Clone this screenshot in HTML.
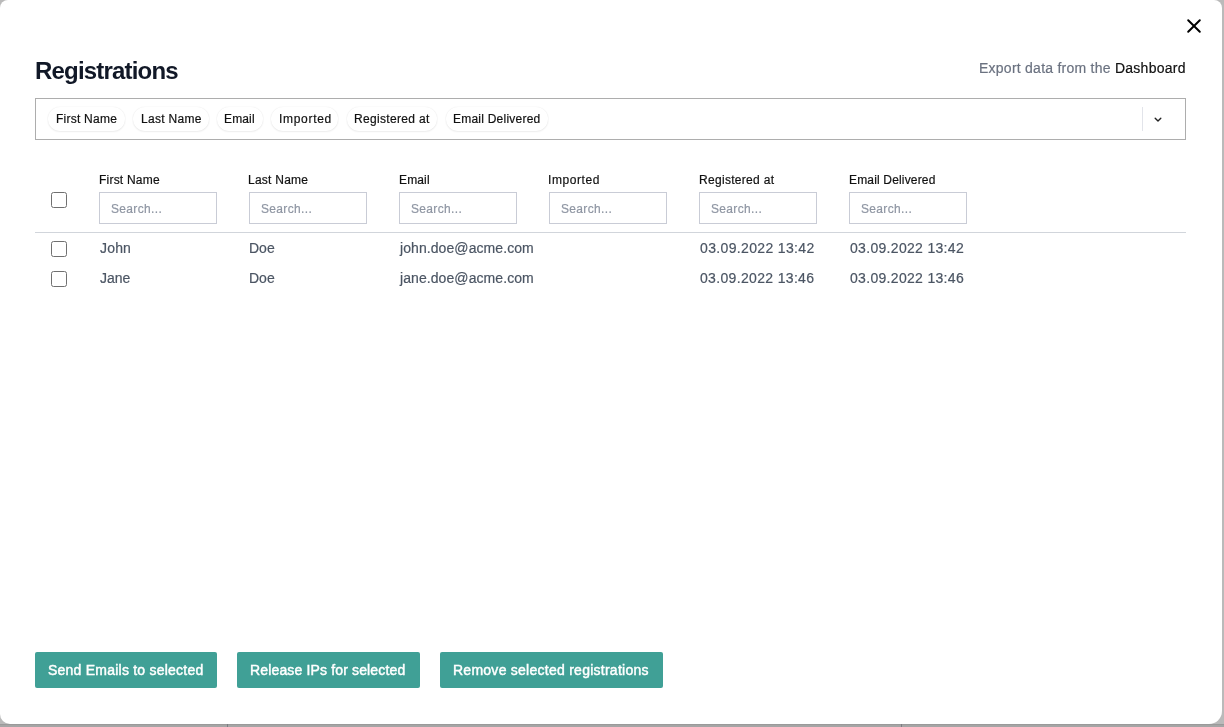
<!DOCTYPE html>
<html>
<head>
<meta charset="utf-8">
<style>
* { box-sizing: border-box; }
html, body { margin: 0; padding: 0; }
body { width: 1224px; height: 727px; overflow: hidden; background: #bababa; position: relative; font-family: "Liberation Sans", sans-serif; }
.bgstrip { position: absolute; left: 0; top: 724px; width: 1224px; height: 3px; background: #a5a5a5; border-top: 1px solid #9a9a9a; }
.vl { position: absolute; top: 724px; width: 1px; height: 3px; background: #7c7c82; }
.modal { position: absolute; left: 0; top: 0; width: 1222px; height: 724px; background: #fff; border-radius: 8px 8px 13px 10px; }
.t { position: absolute; white-space: nowrap; will-change: transform; -webkit-text-stroke: 0.2px currentColor; }
.title { font-size: 24px; font-weight: bold; color: #111827; line-height: 30px; -webkit-text-stroke: 0; }
.export { font-size: 14px; color: #6b7280; line-height: 18px; }
.export span { color: #111; -webkit-text-stroke: 0.2px #111; }
.close { position: absolute; left: 1186px; top: 18px; width: 16px; height: 16px; }
.filter { position: absolute; left: 35px; top: 98px; width: 1151px; height: 42px; border: 1px solid #adadad; }
.pill { position: absolute; top: 106.5px; height: 24.5px; border-radius: 13px; box-shadow: 0 1px 2px rgba(0,0,0,0.06), 0 0 1.5px rgba(0,0,0,0.09); background: #fff; }
.ptxt { font-size: 12px; color: #111; line-height: 15px; }
.sep { position: absolute; left: 1142px; top: 107px; width: 1px; height: 24px; background: #e2e4ea; }
.chev { position: absolute; left: 1153px; top: 115px; width: 10px; height: 10px; }
.hdr { font-size: 12px; color: #111; line-height: 15px; }
.inp { position: absolute; top: 192px; width: 118px; height: 32px; border: 1px solid #c9ccd6; }
.ph { font-size: 12px; color: #8f96a3; line-height: 15px; }
.cb { position: absolute; left: 51px; width: 16px; height: 16px; border: 1.5px solid #707070; border-radius: 2.5px; }
.hline { position: absolute; left: 35px; top: 232px; width: 1151px; height: 1px; background: #d1d5db; }
.cell { font-size: 14px; color: #4b5563; line-height: 18px; }
.btn { position: absolute; top: 652px; height: 36px; background: #40a096; border-radius: 2px; }
.btxt { font-size: 14px; color: #fff; line-height: 18px; -webkit-text-stroke: 0.45px #fff; }
</style>
</head>
<body>
<div class="bgstrip"></div><div class="vl" style="left:227px"></div><div class="vl" style="left:901px"></div>
<div class="modal">
<div id="title" class="t title" style="left:34.82px;top:56.00px;letter-spacing:-0.810px">Registrations</div>
<div id="export" class="t export" style="left:979.20px;top:59.00px;letter-spacing:0.248px">Export data from the <span>Dashboard</span></div>
<svg class="close" viewBox="0 0 16 16"><path d="M2.2 2.2 L13.8 13.8 M13.8 2.2 L2.2 13.8" stroke="#000" stroke-width="2" stroke-linecap="round"/></svg>
<div class="filter"></div>
<div class="pill" style="left:47.5px;width:77.5px"></div>
<div class="pill" style="left:133px;width:75.7px"></div>
<div class="pill" style="left:217px;width:45.5px"></div>
<div class="pill" style="left:271.3px;width:67.2px"></div>
<div class="pill" style="left:347.2px;width:90.2px"></div>
<div class="pill" style="left:445.8px;width:102.5px"></div>
<div id="p1" class="t ptxt" style="left:55.57px;top:112.00px;letter-spacing:0.240px">First Name</div>
<div id="p2" class="t ptxt" style="left:140.70px;top:112.00px;letter-spacing:0.293px">Last Name</div>
<div id="p3" class="t ptxt" style="left:224.36px;top:112.00px;letter-spacing:0.135px">Email</div>
<div id="p4" class="t ptxt" style="left:278.74px;top:112.00px;letter-spacing:0.694px">Imported</div>
<div id="p5" class="t ptxt" style="left:354.32px;top:112.00px;letter-spacing:0.330px">Registered at</div>
<div id="p6" class="t ptxt" style="left:453.32px;top:112.00px;letter-spacing:0.231px">Email Delivered</div>
<div class="sep"></div>
<svg class="chev" viewBox="0 0 10 10"><path d="M2.2 3.3 L5 6 L7.8 3.3" stroke="#222" stroke-width="1.4" fill="none" stroke-linecap="round" stroke-linejoin="round"/></svg>
<div class="cb" style="top:192px"></div>
<div id="h1" class="t hdr" style="left:98.78px;top:173.00px;letter-spacing:0.220px">First Name</div>
<div id="h2" class="t hdr" style="left:248.32px;top:173.00px;letter-spacing:0.247px">Last Name</div>
<div id="h3" class="t hdr" style="left:398.78px;top:173.00px;letter-spacing:0.135px">Email</div>
<div id="h4" class="t hdr" style="left:548.32px;top:173.00px;letter-spacing:0.566px">Imported</div>
<div id="h5" class="t hdr" style="left:698.78px;top:173.00px;letter-spacing:0.300px">Registered at</div>
<div id="h6" class="t hdr" style="left:848.82px;top:173.00px;letter-spacing:0.167px">Email Delivered</div>
<div class="inp" style="left:99px"></div>
<div id="ph1" class="t ph" style="left:110.70px;top:202.00px;letter-spacing:0.338px">Search...</div>
<div class="inp" style="left:249px"></div>
<div id="ph2" class="t ph" style="left:260.70px;top:202.00px;letter-spacing:0.338px">Search...</div>
<div class="inp" style="left:399px"></div>
<div id="ph3" class="t ph" style="left:410.70px;top:202.00px;letter-spacing:0.338px">Search...</div>
<div class="inp" style="left:549px"></div>
<div id="ph4" class="t ph" style="left:560.70px;top:202.00px;letter-spacing:0.338px">Search...</div>
<div class="inp" style="left:699px"></div>
<div id="ph5" class="t ph" style="left:710.70px;top:202.00px;letter-spacing:0.338px">Search...</div>
<div class="inp" style="left:849px"></div>
<div id="ph6" class="t ph" style="left:860.70px;top:202.00px;letter-spacing:0.338px">Search...</div>
<div class="hline"></div>
<div class="cb" style="top:241px"></div>
<div class="cb" style="top:271px"></div>
<div id="fn1" class="t cell" style="left:99.92px;top:239.00px;letter-spacing:0.180px">John</div>
<div id="ln1" class="t cell" style="left:249.20px;top:239.00px;letter-spacing:0.000px">Doe</div>
<div id="em1" class="t cell" style="left:400.26px;top:239.00px;letter-spacing:0.079px">john.doe@acme.com</div>
<div id="rg1" class="t cell" style="left:699.92px;top:239.00px;letter-spacing:0.348px">03.09.2022 13:42</div>
<div id="ed1" class="t cell" style="left:849.58px;top:239.00px;letter-spacing:0.312px">03.09.2022 13:42</div>
<div id="fn2" class="t cell" style="left:99.92px;top:269.00px;letter-spacing:-0.060px">Jane</div>
<div id="ln2" class="t cell" style="left:248.78px;top:269.00px;letter-spacing:-0.000px">Doe</div>
<div id="em2" class="t cell" style="left:400.26px;top:269.00px;letter-spacing:0.079px">jane.doe@acme.com</div>
<div id="rg2" class="t cell" style="left:699.92px;top:269.00px;letter-spacing:0.336px">03.09.2022 13:46</div>
<div id="ed2" class="t cell" style="left:849.58px;top:269.00px;letter-spacing:0.312px">03.09.2022 13:46</div>
<div class="btn" style="left:35px;width:182px"></div>
<div class="btn" style="left:237px;width:183px"></div>
<div class="btn" style="left:440px;width:223px"></div>
<div id="b1" class="t btxt" style="left:48.32px;top:661.00px;letter-spacing:0.229px">Send Emails to selected</div>
<div id="b2" class="t btxt" style="left:250.36px;top:661.00px;letter-spacing:0.149px">Release IPs for selected</div>
<div id="b3" class="t btxt" style="left:452.82px;top:661.00px;letter-spacing:0.257px">Remove selected registrations</div>
</div>
</body>
</html>
